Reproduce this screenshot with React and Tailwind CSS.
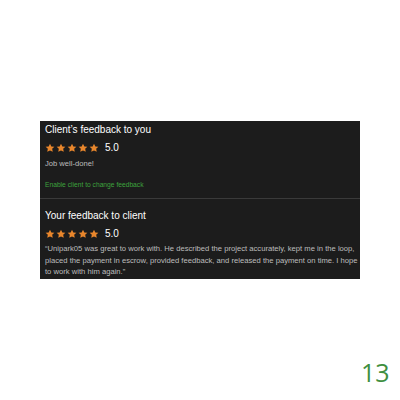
import React from "react";

const Star = () => (
  <svg viewBox="0 0 24 24" className="w-[10px] h-[10px]" fill="#e8862c">
    <path d="M12 1.5l3.2 6.6 7.3.9-5.3 5 1.4 7.2L12 17.8l-6.6 3.4 1.4-7.2-5.3-5 7.3-.9z" />
  </svg>
);

const Rating = ({ value }) => (
  <div className="flex items-center gap-[6px] mt-[6px]">
    <div className="flex gap-[1px]">
      {[0, 1, 2, 3, 4].map((i) => <Star key={i} />)}
    </div>
    <span className="text-[10px] text-white leading-none">{value}</span>
  </div>
);

export default function App() {
  return (
    <div className="w-[400px] h-[400px] bg-white relative" style={{ fontFamily: '"Liberation Sans", Arial, sans-serif' }}>
      <div className="pt-[121px] pl-[40px]">
        <div className="w-[320px] h-[158px] bg-[#1c1c1c] flex flex-col">
          <section className="px-[5px] pt-[2px] h-[78px] border-b border-[#3a3a3a]">
            <h3 className="text-[10px] text-white leading-[14px]">Client’s feedback to you</h3>
            <Rating value="5.0" />
            <p className="text-[7.6px] text-[#bdbdbd] mt-[6px] leading-[10px]">Job well-done!</p>
            <p className="text-[6.7px] text-[#3da33d] mt-[11px] leading-[10px]">Enable client to change feedback</p>
          </section>
          <section className="pl-[5px] pr-[2px] pt-[10px]">
            <h3 className="text-[10px] text-white leading-[14px]">Your feedback to client</h3>
            <Rating value="5.0" />
            <p className="text-[7.65px] text-[#bdbdbd] mt-[4px] leading-[11.5px]">
              “Unipark05 was great to work with. He described the project accurately, kept me in the loop, placed the payment in escrow, provided feedback, and released the payment on time. I hope to work with him again.”
            </p>
          </section>
        </div>
      </div>
      <span className="absolute left-[361px] top-[360px] text-[25px] text-[#3f8f3f] leading-none" style={{ fontFamily: '"Open Sans", sans-serif' }}>13</span>
    </div>
  );
}
